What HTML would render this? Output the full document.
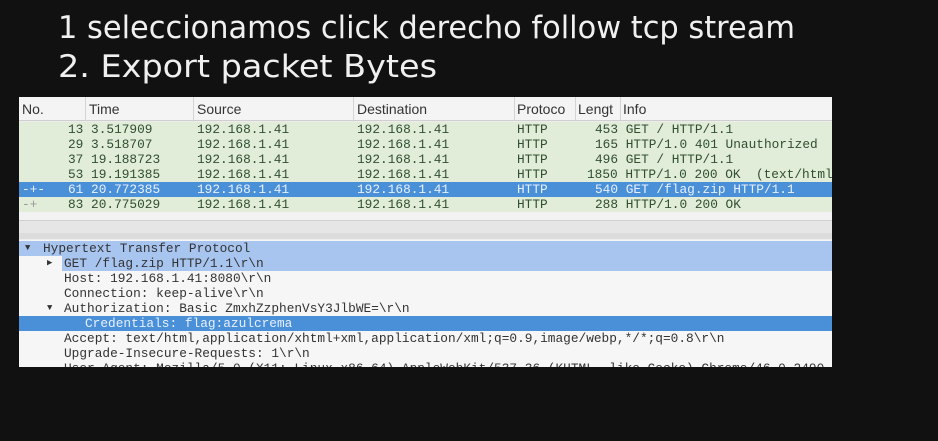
<!DOCTYPE html>
<html><head><meta charset="utf-8"><style>
body{margin:0;width:938px;height:441px;background:#111;overflow:hidden;position:relative;font-family:"Liberation Sans",sans-serif}
.p{position:absolute;left:19px;top:97px;width:813px;height:270px;background:#ececec;overflow:hidden}
.hdr{position:absolute;left:0;top:0;width:813px;height:23px;background:#f4f4f4;border-bottom:1px solid #cfcfcf}
.hdr span{position:absolute;top:4px;font-size:14px;color:#333}
.hdr i{position:absolute;top:0;width:1px;height:23px;background:#d4d4d4}
.m{font-family:"Liberation Mono",monospace;font-size:12.8px;white-space:pre}
.r{position:absolute;left:0;width:813px;height:15px;background:#e1ecd9;color:#2f4f2f}
.r span{position:absolute;top:0;line-height:15px}
.sel{background:#4a90d9;color:#e8f0ff}
.d{position:absolute;left:0;width:813px;height:15px;line-height:15px;color:#333}
.d span{position:absolute;top:0}
</style></head><body>
<svg width="938" height="95" style="position:absolute;left:0;top:0">
<text x="58" y="38" fill="#f0f0f0" font-family="DejaVu Sans,sans-serif" font-size="31" textLength="737" lengthAdjust="spacingAndGlyphs">1 seleccionamos click derecho follow tcp stream</text>
<text x="58" y="77" fill="#f0f0f0" font-family="DejaVu Sans,sans-serif" font-size="31" textLength="379" lengthAdjust="spacingAndGlyphs">2. Export packet Bytes</text>
</svg>
<div class="p">
<div class="hdr">
<span style="left:3px">No.</span><i style="left:66px"></i>
<span style="left:70px">Time</span><i style="left:174px"></i>
<span style="left:178px">Source</span><i style="left:334px"></i>
<span style="left:338px">Destination</span><i style="left:495px"></i>
<span style="left:498px">Protoco</span><i style="left:556px"></i>
<span style="left:559px">Lengt</span><i style="left:601px"></i>
<span style="left:604px">Info</span>
</div>
<div class="r m" style="top:25px"><span style="left:49px">13 3.517909</span><span style="left:178px">192.168.1.41</span><span style="left:338px">192.168.1.41</span><span style="left:498px">HTTP</span><span style="left:576px">453 GET / HTTP/1.1</span></div>
<div class="r m" style="top:40px"><span style="left:49px">29 3.518707</span><span style="left:178px">192.168.1.41</span><span style="left:338px">192.168.1.41</span><span style="left:498px">HTTP</span><span style="left:576px">165 HTTP/1.0 401 Unauthorized</span></div>
<div class="r m" style="top:55px"><span style="left:49px">37 19.188723</span><span style="left:178px">192.168.1.41</span><span style="left:338px">192.168.1.41</span><span style="left:498px">HTTP</span><span style="left:576px">496 GET / HTTP/1.1</span></div>
<div class="r m" style="top:70px"><span style="left:49px">53 19.191385</span><span style="left:178px">192.168.1.41</span><span style="left:338px">192.168.1.41</span><span style="left:498px">HTTP</span><span style="left:568px">1850 HTTP/1.0 200 OK  (text/html</span></div>
<div class="r m sel" style="top:85px"><span style="left:3px">-+-</span><span style="left:49px">61 20.772385</span><span style="left:178px">192.168.1.41</span><span style="left:338px">192.168.1.41</span><span style="left:498px">HTTP</span><span style="left:576px">540 GET /flag.zip HTTP/1.1</span></div>
<div class="r m" style="top:100px"><span style="left:3px;color:#999">-+</span><span style="left:49px">83 20.775029</span><span style="left:178px">192.168.1.41</span><span style="left:338px">192.168.1.41</span><span style="left:498px">HTTP</span><span style="left:576px">288 HTTP/1.0 200 OK</span></div>
<div style="position:absolute;left:0;top:115px;width:813px;height:8px;background:#f2f2f2"></div>
<div style="position:absolute;left:0;top:123px;width:813px;height:12px;background:#e6e6e6;border-top:1px solid #d0d0d0"></div>
<div style="position:absolute;left:0;top:136px;width:813px;height:6px;background:#dcdcdc"></div>
<div style="position:absolute;left:0;top:143px;width:813px;height:127px;background:#f6f6f6"></div>
<div class="d m" style="top:144px;background:#a8c5f0"><span style="left:6px;font-size:9px">▼</span><span style="left:24px">Hypertext Transfer Protocol</span></div>
<div class="d m" style="top:159px"><span style="left:28px;font-size:9px">▶</span><span style="left:43px;right:0;background:#a8c5f0;padding-left:2px">GET /flag.zip HTTP/1.1\r\n</span></div>
<div class="d m" style="top:174px"><span style="left:45px">Host: 192.168.1.41:8080\r\n</span></div>
<div class="d m" style="top:189px"><span style="left:45px">Connection: keep-alive\r\n</span></div>
<div class="d m" style="top:204px"><span style="left:28px;font-size:9px">▼</span><span style="left:45px">Authorization: Basic ZmxhZzphenVsY3JlbWE=\r\n</span></div>
<div class="d m" style="top:219px;background:#4a90d9;color:#e8f0ff"><span style="left:66px">Credentials: flag:azulcrema</span></div>
<div class="d m" style="top:234px"><span style="left:45px">Accept: text/html,application/xhtml+xml,application/xml;q=0.9,image/webp,*/*;q=0.8\r\n</span></div>
<div class="d m" style="top:249px"><span style="left:45px">Upgrade-Insecure-Requests: 1\r\n</span></div>
<div class="d m" style="top:264px"><span style="left:45px">User-Agent: Mozilla/5.0 (X11; Linux x86_64) AppleWebKit/537.36 (KHTML, like Gecko) Chrome/46.0.2490.8</span></div>
</div>
</body></html>
